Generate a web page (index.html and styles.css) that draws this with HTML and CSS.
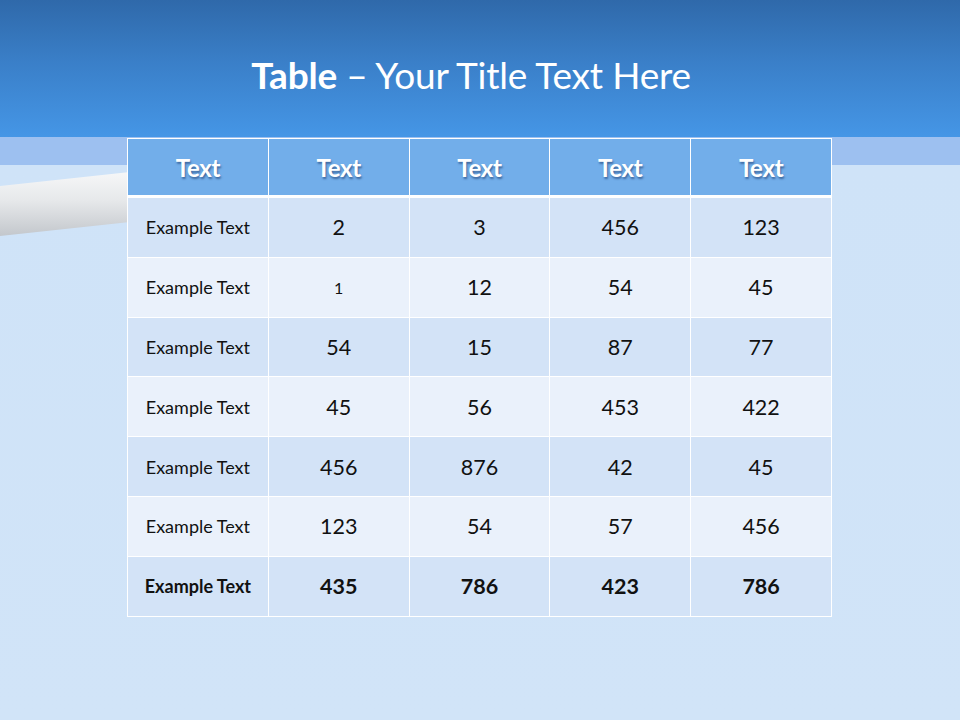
FILE: index.html
```html
<!DOCTYPE html>
<html>
<head>
<meta charset="utf-8">
<link rel="stylesheet" href="styles.css">
</head>
<body>
<div class="slide">
  <svg class="tube" width="130" height="70" viewBox="0 0 130 70">
    <defs>
      <linearGradient id="tg" x1="0" y1="0" x2="0" y2="1">
        <stop offset="0" stop-color="#f6f7f8"/>
        <stop offset="0.45" stop-color="#e6e8ea"/>
        <stop offset="1" stop-color="#c3c7cc"/>
      </linearGradient>
    </defs>
    <polygon points="0,15 130,1 130,51 0,65" fill="url(#tg)"/>
  </svg>
  <header class="title-bar">
    <h1 class="title"><b>Table</b> – Your Title Text Here</h1>
  </header>
  <main class="content">
    <table class="data">
      <thead>
        <tr><th>Text</th><th>Text</th><th>Text</th><th>Text</th><th>Text</th></tr>
      </thead>
      <tbody>
        <tr class="odd"><td class="label">Example Text</td><td>2</td><td>3</td><td>456</td><td>123</td></tr>
        <tr class="even"><td class="label">Example Text</td><td class="small">1</td><td>12</td><td>54</td><td>45</td></tr>
        <tr class="odd"><td class="label">Example Text</td><td>54</td><td>15</td><td>87</td><td>77</td></tr>
        <tr class="even"><td class="label">Example Text</td><td>45</td><td>56</td><td>453</td><td>422</td></tr>
        <tr class="odd"><td class="label">Example Text</td><td>456</td><td>876</td><td>42</td><td>45</td></tr>
        <tr class="even"><td class="label">Example Text</td><td>123</td><td>54</td><td>57</td><td>456</td></tr>
        <tr class="odd total"><td class="label">Example Text</td><td>435</td><td>786</td><td>423</td><td>786</td></tr>
      </tbody>
    </table>
  </main>
</div>
</body>
</html>
```
FILE: styles.css
```css
html, body {
  margin: 0;
  padding: 0;
}
body {
  font-family: Lato, "Open Sans", sans-serif;
}
.slide {
  position: relative;
  width: 960px;
  height: 720px;
  overflow: hidden;
  background:
    linear-gradient(to bottom, #9dc0f0 0, #9dc0f0 28px, #cfe3f8 28px, #d1e4f8 100%) 0 137px / 100% 583px no-repeat,
    #cfe3f8;
}
.tube {
  position: absolute;
  left: 0;
  top: 171px;
}
.title-bar {
  height: 137px;
  box-sizing: border-box;
  padding-top: 12px;
  background: linear-gradient(to bottom, #2f69aa 0%, #3a7fc8 45%, #4596e6 100%);
  display: flex;
  align-items: center;
  justify-content: center;
}
.title {
  margin: 0 18px 0 0;
  color: #ffffff;
  font-weight: 400;
  font-size: 37px;
  letter-spacing: -0.2px;
}
.title b {
  font-weight: 700;
}
.content {
  position: relative;
  display: flex;
  justify-content: center;
  padding-top: 1px;
}
.data {
  border-collapse: collapse;
  width: 705px;
  table-layout: fixed;
  margin-left: -1px;
}
.data th, .data td {
  border: 1px solid #ffffff;
  text-align: center;
  color: #111111;
  padding: 0;
}
.data th {
  height: 56px;
  background: #72aeea;
  color: #ffffff;
  font-weight: 700;
  font-size: 24px;
  text-shadow: 1px 2px 2px rgba(20, 50, 100, 0.55);
  border-bottom: 3px solid #ffffff;
  letter-spacing: -0.3px;
}
.data td {
  height: 58.8px;
  font-size: 21.5px;
}
.data td.label {
  font-size: 18px;
}
.data td.small {
  font-size: 16px;
}
.odd td {
  background: #d3e3f7;
}
.even td {
  background: #eaf1fb;
}
.total td {
  font-weight: 700;
}
```
